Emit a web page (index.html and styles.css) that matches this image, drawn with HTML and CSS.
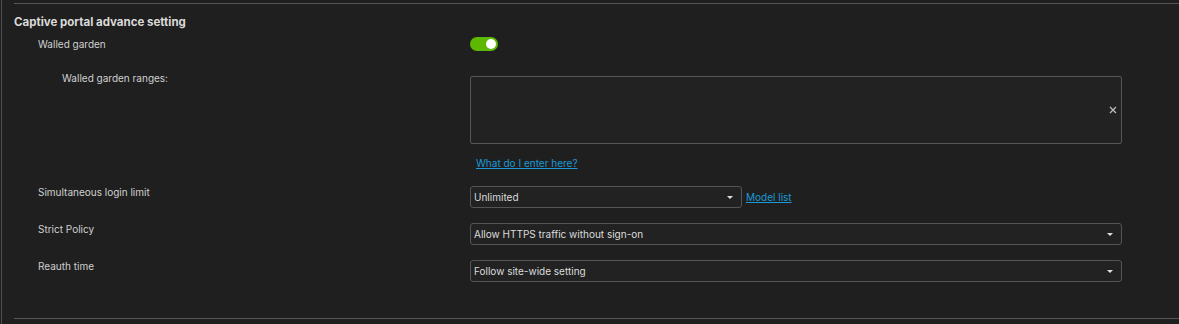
FILE: index.html
```html
<!DOCTYPE html>
<html>
<head>
<meta charset="utf-8">
<link rel="stylesheet" href="styles.css">
</head>
<body>
<div class="panel">
  <div class="section">
    <h2 class="title">Captive portal advance setting</h2>

    <div class="row row-toggle">
      <div class="label">Walled garden</div>
      <div class="field">
        <span class="toggle"><span class="knob"></span></span>
      </div>
    </div>

    <div class="row row-ranges">
      <div class="label label-sub">Walled garden ranges:</div>
      <div class="field field-col">
        <div class="textarea">
          <svg class="clear" width="8" height="8" viewBox="0 0 8 8"><path d="M1 1 L7 7 M7 1 L1 7" stroke="#bdbdbd" stroke-width="1.3"/></svg>
        </div>
        <a class="link help" href="#">What do I enter here?</a>
      </div>
    </div>

    <div class="row row-select row-first">
      <div class="label">Simultaneous login limit</div>
      <div class="field field-inline">
        <div class="select select-short"><span>Unlimited</span><span class="arrow"></span></div>
        <a class="link" href="#">Model list</a>
      </div>
    </div>

    <div class="row row-select">
      <div class="label">Strict Policy</div>
      <div class="field">
        <div class="select"><span>Allow HTTPS traffic without sign-on</span><span class="arrow"></span></div>
      </div>
    </div>

    <div class="row row-select">
      <div class="label">Reauth time</div>
      <div class="field">
        <div class="select"><span>Follow site-wide setting</span><span class="arrow"></span></div>
      </div>
    </div>
  </div>
</div>
</body>
</html>
```

FILE: styles.css
```css
html, body {
  margin: 0;
  padding: 0;
  background: #1f1f1f;
  height: 324px;
  overflow: hidden;
}

body {
  font-family: Inter, "Noto Sans", sans-serif;
  color: #d6d6d6;
}

.panel {
  margin-left: 1px;
  border-left: 1px solid #4d4d4d;
  height: 324px;
  box-sizing: border-box;
  padding-top: 3px;
}

.section {
  margin-left: 12px;
  border-top: 1px solid #555;
  border-bottom: 1px solid #555;
  height: 316px;
  box-sizing: border-box;
}

.title {
  margin: 0;
  padding-top: 11px;
  font-size: 11.5px;
  line-height: 14px;
  font-weight: 700;
  color: #dadada;
}

.row {
  display: flex;
  padding-left: 24px;
}

.label {
  width: 432px;
  flex: none;
  font-size: 10px;
  line-height: 12px;
  color: #d0d0d0;
}

.label-sub {
  padding-left: 24px;
  width: 408px;
}

.field {
  width: 652px;
  flex: none;
}

.row-toggle {
  margin-top: 8px;
  align-items: center;
}

.toggle {
  display: block;
  width: 28px;
  height: 14px;
  border-radius: 7px;
  background: #5cb800;
  position: relative;
}

.knob {
  position: absolute;
  right: 2px;
  top: 2px;
  width: 10px;
  height: 10px;
  border-radius: 50%;
  background: #fff;
}

.row-ranges {
  margin-top: 25px;
}

.row-ranges .label {
  margin-top: -4px;
}

.field-col {
  display: flex;
  flex-direction: column;
}

.textarea {
  height: 66px;
  border: 1px solid #555;
  border-radius: 2px;
  background: #222;
  display: flex;
  align-items: center;
  justify-content: flex-end;
  padding-right: 4px;
}

.clear {
  display: block;
}

.link {
  color: #1b9ad6;
  font-size: 10px;
  line-height: 12px;
  text-decoration: underline;
}

.help {
  margin-top: 13px;
  margin-left: 6px;
  align-self: flex-start;
}

.row-select {
  margin-top: 15px;
}

.row-first {
  margin-top: 17px;
}

.field-inline {
  display: flex;
  align-items: center;
  gap: 4px;
}

.select {
  height: 20px;
  border: 1px solid #555;
  border-radius: 3px;
  background: #222;
  display: flex;
  align-items: center;
  justify-content: space-between;
  padding: 0 8px 0 3px;
  font-size: 10px;
  color: #dcdcdc;
}

.select-short {
  width: 259px;
}

.arrow {
  width: 0;
  height: 0;
  border-left: 3px solid transparent;
  border-right: 3px solid transparent;
  border-top: 3px solid #e0e0e0;
}
```
